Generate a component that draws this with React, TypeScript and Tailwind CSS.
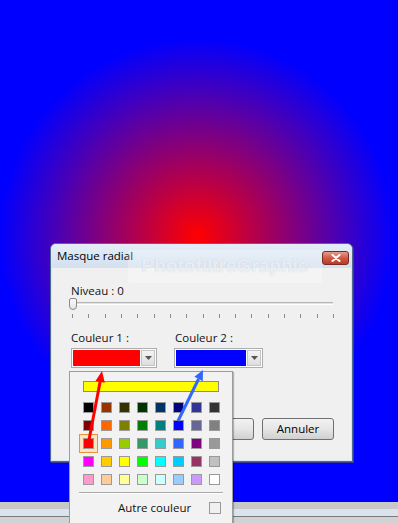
import React from "react";

const rows: string[][] = [
  ["#000000", "#993300", "#333300", "#003300", "#003366", "#000080", "#333399", "#333333"],
  ["#800000", "#ff6600", "#808000", "#008000", "#008080", "#0000ff", "#666699", "#808080"],
  ["#ff0000", "#ff9900", "#99cc00", "#339966", "#33cccc", "#3366ff", "#800080", "#999999"],
  ["#ff00ff", "#ffcc00", "#ffff00", "#00ff00", "#00ffff", "#00ccff", "#993366", "#c0c0c0"],
  ["#ff99cc", "#ffcc99", "#ffff99", "#ccffcc", "#ccffff", "#99ccff", "#cc99ff", "#ffffff"],
];

function Combo({ color, w }: { color: string; w: string }) {
  return (
    <div className={`${w} h-[20px] flex border border-[#abadb3] bg-white p-[1px] gap-[1px]`}>
      <div className="flex-1 h-full" style={{ backgroundColor: color }} />
      <div className="w-[14px] h-full border border-[#c4c4c4] bg-gradient-to-b from-[#f4f4f4] to-[#dedede] flex items-center justify-center">
        <svg width="7" height="4" viewBox="0 0 7 4">
          <path d="M0 0 L7 0 L3.5 4 Z" fill="#555" />
        </svg>
      </div>
    </div>
  );
}

function Btn({ label }: { label: string }) {
  return (
    <div className="w-[72px] h-[22px] rounded-[3px] border border-[#707070] bg-gradient-to-b from-[#f2f2f2] via-[#e6e6e6] to-[#d0d0d0] flex items-center justify-center text-[11.5px] text-black">
      {label}
    </div>
  );
}

export default function App() {
  const ticks = Array.from({ length: 17 });
  return (
    <div className="relative w-[398px] h-[523px] overflow-hidden flex flex-col font-['Segoe_UI','Open_Sans',sans-serif] text-[#111]">
      {/* canvas */}
      <div className="h-[502px] w-full bg-[radial-gradient(circle_at_197px_236px,#ff0000_0px,#0000ff_198px)]" />
      {/* bottom strip */}
      <div className="h-[7px] bg-[#c8c8c8]" />
      <div className="h-[8px] bg-[#dbe4ee] border-b border-[#7a7a7a]" />
      <div className="flex-1 bg-[#d2d2d2]" />

      {/* dialog */}
      <div className="absolute left-[50px] top-[243px] w-[303px] h-[219px] rounded-t-[6px] border border-[#4d6a94] bg-[#d7e3f0] flex flex-col shadow-[1px_1px_0_#3b3b8a]">
        <div className="h-[24px] flex items-start justify-between pl-[6px] pr-[3px] pt-[3px] rounded-t-[5px] bg-gradient-to-b from-[#e4edf7] to-[#d3e0ee]">
          <span className="text-[11.5px] leading-[18px] text-black">Masque radial</span>
          <div className="mt-[4px] w-[27px] h-[14px] rounded-[3px] border border-[#7a2a20] bg-gradient-to-b from-[#e69a8a] via-[#cf5a44] to-[#b83a25] flex items-center justify-center">
            <svg width="10" height="8" viewBox="0 0 10 8">
              <path d="M1.5 1 L8.5 7 M8.5 1 L1.5 7" stroke="#ffffff" strokeWidth="2" strokeLinecap="round" />
            </svg>
          </div>
        </div>
        <div className="flex-1 mx-[1px] mb-[1px] bg-[#f0f0f0] flex flex-col pl-[19px] pt-[16px]">
          <div className="h-[14px] leading-[14px] text-[11.5px]">Niveau : 0</div>
          <div className="relative h-[12px] w-[265px] ml-[-2px] mt-[0px]">
            <div className="absolute left-[3px] right-[1px] top-[4px] h-[3px] border-t border-[#b5b5b5] border-b border-b-white bg-[#e2e2e2]" />
            <div className="absolute left-0 top-0 w-[8px] h-[12px] rounded-b-[4px] rounded-t-[2px] border border-[#8a8a8a] bg-gradient-to-b from-[#fbfbfb] to-[#e4e4e4]" />
          </div>
          <div className="mt-[4px] ml-[1px] w-[262px] h-[4px] flex justify-between">
            {ticks.map((_, i) => (
              <div key={i} className="w-[1px] h-[4px] bg-[#8c8c8c]" />
            ))}
          </div>
          <div className="mt-[13px] flex gap-[17px]">
            <div className="flex flex-col gap-[3px]">
              <div className="h-[14px] leading-[14px] text-[11.5px]">Couleur 1 :</div>
              <Combo color="#ff0000" w="w-[86px]" />
            </div>
            <div className="flex flex-col gap-[3px]">
              <div className="h-[14px] leading-[14px] text-[11.5px] pl-[1px]">Couleur 2 :</div>
              <Combo color="#0000ff" w="w-[89px]" />
            </div>
          </div>
          <div className="mt-[50px] flex justify-end gap-[8px] pr-[17px]">
            <Btn label="OK" />
            <Btn label="Annuler" />
          </div>
        </div>
      </div>

      {/* watermark */}
      <div className="absolute left-[128px] top-[250px] w-[194px] h-[33px] bg-white/25 rounded-[2px] flex items-center justify-center">
        <span className="font-['Liberation_Sans',Arial,sans-serif] font-bold text-[19px] text-white/70 [text-shadow:0_0_1px_rgba(150,170,195,0.6)]">
          PhotofiltreGraphic
        </span>
      </div>

      {/* color dropdown */}
      <div className="absolute left-[69px] top-[371px] w-[164px] h-[160px] border border-[#9c9c9c] bg-[#f2f2f2] shadow-[1px_1px_1px_rgba(0,0,0,0.25)] flex flex-col pt-[9px]">
        <div className="ml-[13px] w-[136px] h-[11px] bg-[#ffff00] border border-[#8a8a8a]" />
        <div className="ml-[13px] mt-[10px] grid grid-cols-[repeat(8,11px)] gap-[7px]">
          {rows.map((r, ri) =>
            r.map((c, ci) => (
              <div
                key={`${ri}-${ci}`}
                className={
                  ri === 2 && ci === 0
                    ? "w-[11px] h-[11px] border border-[#9a9a9a] shadow-[0_0_0_3px_#fbe3c4,0_0_0_4px_#e8923a]"
                    : "w-[11px] h-[11px] border border-[#9a9a9a]"
                }
                style={{ backgroundColor: c }}
              />
            ))
          )}
        </div>
        <div className="mt-[7px] mx-[9px] h-[2px] border-t border-[#a8a8a8] border-b border-b-white" />
        <div className="mt-[6px] flex items-center pl-[48px] pr-[11px] h-[16px]">
          <span className="text-[11.5px] leading-[16px]">Autre couleur</span>
          <div className="ml-auto w-[12px] h-[12px] border border-[#9a9a9a] bg-[#f0f0f0]" />
        </div>
      </div>

      {/* annotation arrows */}
      <svg className="absolute left-0 top-0 pointer-events-none" width="398" height="523" viewBox="0 0 398 523">
        <line x1="89" y1="440" x2="100.1" y2="381.8" stroke="#ff0000" strokeWidth="3" />
        <polygon points="102,371 104.8,382.7 95.5,380.9" fill="#ff0000" />
        <line x1="178" y1="421" x2="198.6" y2="379" stroke="#3366ff" strokeWidth="3" />
        <polygon points="203,370 202.8,381.3 194.4,376.8" fill="#3366ff" />
      </svg>
    </div>
  );
}
